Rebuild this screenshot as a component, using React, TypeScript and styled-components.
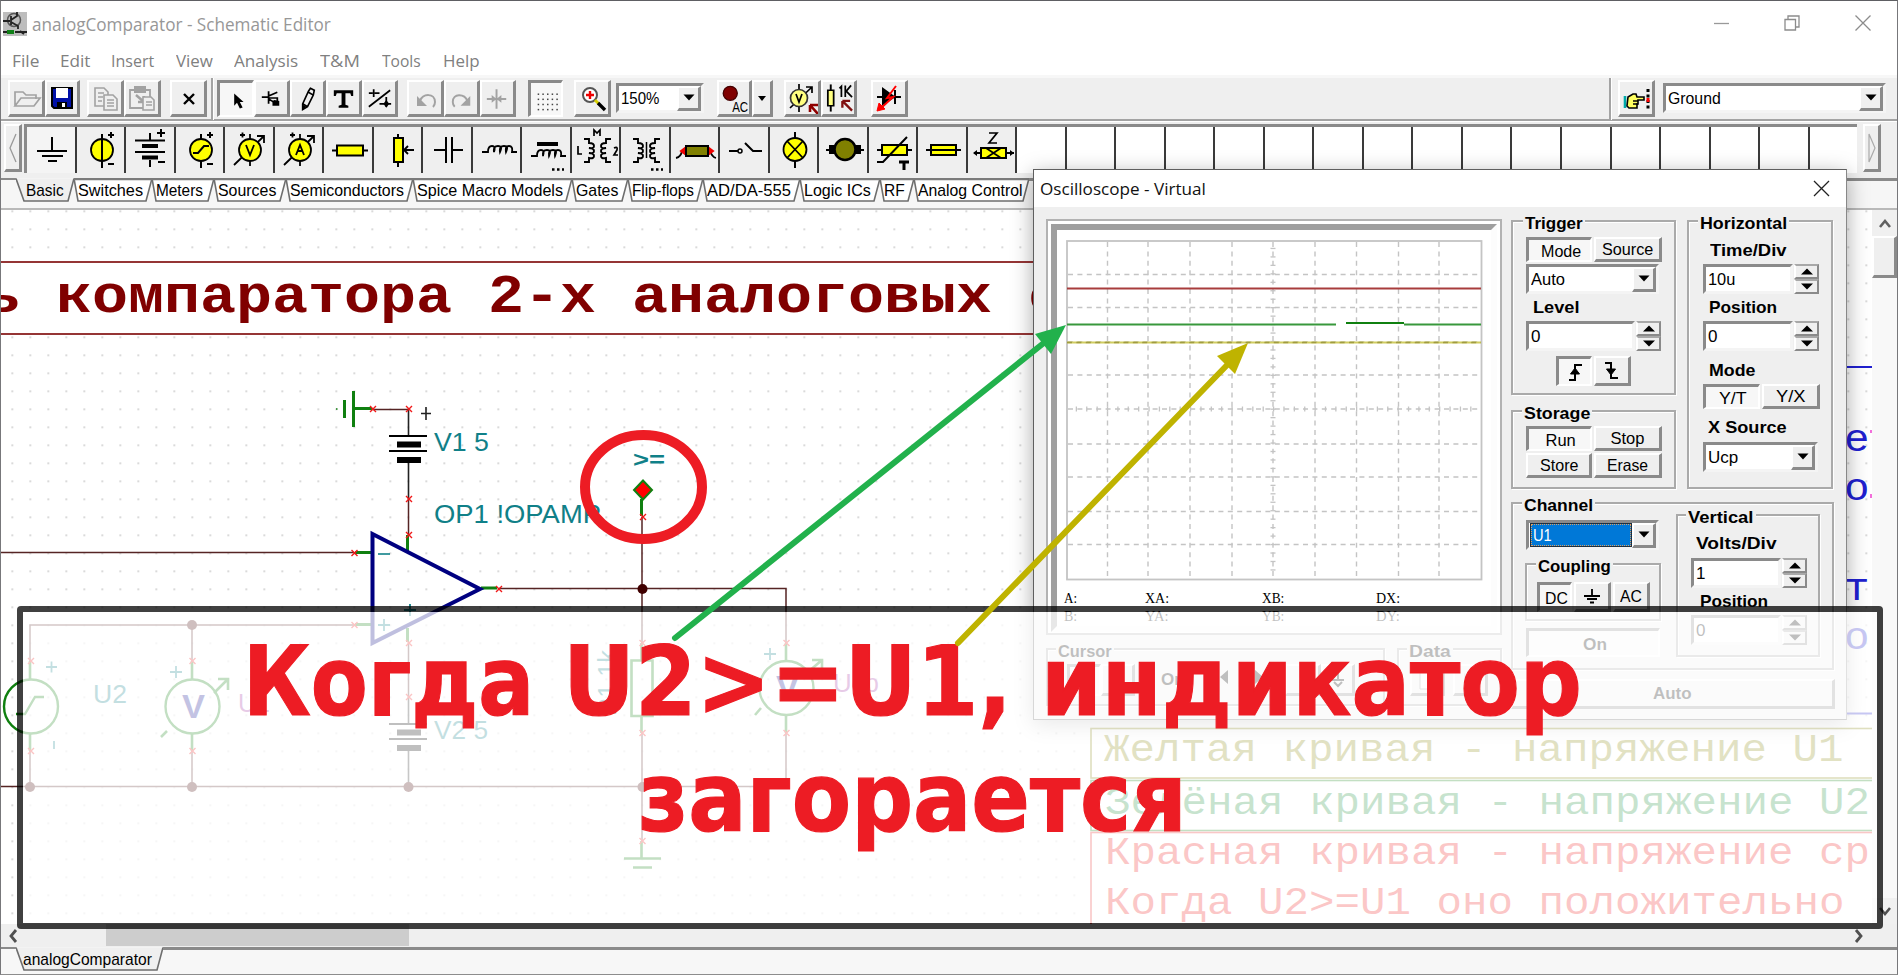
import React, { useLayoutEffect, useRef, useState } from "react";
import styled, { createGlobalStyle, css } from "styled-components";

const Global = createGlobalStyle`
  html, body { margin: 0; padding: 0; background: #fff; overflow: hidden; }
  *, *::before, *::after { box-sizing: border-box; }
  svg { display: block; }
`;

const SANS = `"Liberation Sans", Arial, sans-serif`;
const SEGOE = `"Open Sans", "Noto Sans", sans-serif`;
const MONO = `"Liberation Mono", "Courier New", monospace`;
const FACE = "#efefef";
const SHADE = "#8a8a8a";

/* Text squeezed or stretched horizontally to a fixed width */
const FitBox = styled.span`
  display: inline-block;
  flex: none;
  white-space: nowrap;
  text-align: left;
`;
const FitInner = styled.span`
  display: inline-block;
  transform-origin: 0 50%;
  white-space: pre;
`;
function Fit({ w, children }: { w: number; children: React.ReactNode }) {
  const ref = useRef<HTMLSpanElement>(null);
  const [k, setK] = useState(1);
  useLayoutEffect(() => {
    if (ref.current) setK(w / ref.current.offsetWidth);
  }, [w]);
  return (
    <FitBox style={{ width: w }}>
      <FitInner ref={ref} style={{ transform: `scaleX(${k})` }}>{children}</FitInner>
    </FitBox>
  );
}

/* ---------- shared bevel parts ---------- */
const raised = css`
  background: ${FACE};
  border-style: solid;
  border-width: 2px 3px 3px 2px;
  border-color: #fff ${SHADE} ${SHADE} #fff;
`;
const sunken = css`
  background: #f7f7f7;
  border-style: solid;
  border-width: 3px 2px 2px 3px;
  border-color: ${SHADE} #fff #fff ${SHADE};
`;
const Button = styled.div<{ $w: number; $h?: number; $down?: boolean; $bold?: boolean }>`
  ${(p) => (p.$down ? sunken : raised)}
  width: ${(p) => p.$w}px;
  height: ${(p) => p.$h ?? 25}px;
  flex: none;
  display: flex;
  align-items: center;
  justify-content: center;
  overflow: hidden;
  padding: ${(p) => (p.$down ? "2px 0 0 2px" : "0")};
  font: ${(p) => (p.$bold ? "bold " : "")}16.5px ${SANS};
  line-height: 1;
`;
const Field = styled.div<{ $w: number; $h?: number }>`
  width: ${(p) => p.$w}px;
  height: ${(p) => p.$h ?? 30}px;
  flex: none;
  display: flex;
  align-items: center;
  background: #fff;
  border: 3px solid;
  border-color: ${SHADE} #f4f4f4 #f4f4f4 ${SHADE};
  padding-left: 2px;
  font: 17px ${SANS};
  line-height: 1;
`;
const Grow = styled.div`
  flex: 1;
`;
const Space = styled.div<{ $w: number }>`
  width: ${(p) => p.$w}px;
  flex: none;
`;
const DropButton = styled.div`
  ${raised}
  width: 24px;
  height: 25px;
  display: flex;
  align-items: center;
  justify-content: center;
`;
const Down = () => (
  <svg width="12" height="7"><path d="M0.5 0.5H11.5L6 6.5Z" /></svg>
);
const Combo = ({ w, h, text, tw }: { w: number; h?: number; text: string; tw: number }) => (
  <Field $w={w} $h={h}>
    <Fit w={tw}>{text}</Fit>
    <Grow />
    <DropButton><Down /></DropButton>
  </Field>
);

/* ---------- main window ---------- */
const Win = styled.div`
  position: relative;
  width: 1898px;
  height: 975px;
  overflow: hidden;
  display: flex;
  flex-direction: column;
  background: #fff;
  border-top: 1px solid #5e5f63;
  border-left: 1px solid #77777a;
  border-right: 1px solid #77777a;
  border-bottom: 1px solid #8c8c8c;
`;
const TitleBar = styled.div`
  height: 46px;
  flex: none;
  display: flex;
  align-items: center;
  padding: 0 26px 0 2px;
  font: 18px ${SEGOE};
  color: #979797;
`;
const Controls = styled.div`
  display: flex;
  gap: 55px;
  padding-bottom: 2px;
`;
const MenuBar = styled.div`
  height: 28px;
  flex: none;
  display: flex;
  align-items: center;
  padding-left: 11px;
  font: 16px ${SEGOE};
  color: #808080;
`;
const MenuItem = styled.div<{ $w: number }>`
  width: ${(p) => p.$w}px;
`;
const Toolbar = styled.div`
  height: 46px;
  flex: none;
  display: flex;
  align-items: flex-start;
  padding: 2px 11px 0 7px;
  background: ${FACE};
  border-top: 3px solid #f7f7f7;
  border-bottom: 2px solid #a3a3a3;
`;
const Separator = styled.div`
  width: 3px;
  height: 42px;
  margin-top: -2px;
  flex: none;
  background: #a3a3a3;
  border-right: 1px solid #fff;
`;
const Lower = styled.div`
  padding-top: 3px;
`;

const Palette = styled.div`
  height: 57px;
  flex: none;
  display: flex;
  background: ${FACE};
  border-top: 1px solid #fff;
  padding: 2px 16px 0 3px;
`;
const Scroller = styled.div`
  ${raised}
  width: 18px;
  height: 48px;
  flex: none;
  display: flex;
  align-items: center;
  justify-content: center;
`;
const Cells = styled.div`
  width: 1833px;
  height: 49px;
  margin: 0 6px 0 2px;
  display: flex;
  border-top: 3px solid ${SHADE};
  border-left: 3px solid ${SHADE};
  background: #fff;
`;
const Cell = styled.div<{ $filled: boolean; $down?: boolean }>`
  flex: 1 1 0;
  height: 46px;
  border-right: 2px solid #3a3a3a;
  background: ${(p) => (p.$filled ? (p.$down ? "#f4f4f4" : FACE) : "#fff")};
  &:last-child { border-right: 0; }
`;

const TabStrip = styled.div`
  height: 32px;
  flex: none;
  display: flex;
  align-items: flex-start;
  background: #f6f6f6;
  border-bottom: 2px solid #b9b9b9;
`;
const TabLead = styled.div`
  width: 15px;
  height: 2px;
  background: ${SHADE};
`;
const TabBox = styled.div<{ $w: number }>`
  position: relative;
  width: ${(p) => p.$w}px;
  height: 25px;
  flex: none;
  font: 17px ${SANS};
  line-height: 26px;
`;
const TabBack = styled.svg`
  position: absolute;
  inset: 0;
`;
const TabText = styled.div<{ $x: number }>`
  position: relative;
  padding-left: ${(p) => p.$x}px;
`;
const TabRest = styled.div`
  flex: 1;
  height: 3px;
  background: ${SHADE};
`;
const Tab = ({ w, x, tw, text, active, h = 24 }: { w: number; x: number; tw: number; text: string; active?: boolean; h?: number }) => (
  <TabBox $w={w}>
    <TabBack width={w} height={h + 1}>
      <path d={`M0 0.5L${active ? 8 : 4} ${h - 1}H${w - 6}L${w} 0.5`} fill={active ? FACE : "#fff"} stroke="#6e6e6e" strokeWidth="1.6" />
      {!active && <path d={`M0 1H${w}`} stroke="#7b7b7b" strokeWidth="2.4" />}
    </TabBack>
    <TabText $x={x}><Fit w={tw}>{text}</Fit></TabText>
  </TabBox>
);

const Work = styled.div`
  height: 714px;
  flex: none;
  display: flex;
`;
const VScroll = styled.div`
  flex: 1;
  background: #f8f8f8;
  display: flex;
  flex-direction: column;
`;
const VArrow = styled.div`
  height: 26px;
  background: #f0f0f0;
  display: flex;
  align-items: center;
  justify-content: center;
`;
const VThumb = styled.div`
  ${raised}
  height: 42px;
`;
const HScroll = styled.div`
  height: 23px;
  flex: none;
  display: flex;
  align-items: center;
  background: ${FACE};
  padding: 0 32px 0 6px;
`;
const HThumb = styled.div`
  width: 303px;
  height: 22px;
  margin: 0 0 1px 88px;
  background: #cdcdcd;
`;
const Sheets = styled.div`
  flex: 1;
  display: flex;
  background: #f7f7f7;
`;

/* ---------- icons: toolbar ---------- */
const Ico = ({ children, w = 32, h = 32 }: { children: React.ReactNode; w?: number; h?: number }) => (
  <svg width={w} height={h} viewBox={`0 0 ${w} ${h}`} fill="none" stroke="#000" strokeWidth="2">{children}</svg>
);
const G = "#a2a2a2";
const OpenI = () => <Ico><path d="M5 24V10h8l3 3h10v4M5 24l6-8h19l-6 8z" stroke={G} strokeWidth="1.7" /></Ico>;
const SaveI = () => (
  <Ico w={30}><path d="M5 6h20v20H7l-2-2z" fill="#0010a8" stroke="#000" /><path d="M9 6h12v10H9z" fill="#fff" stroke="none" /><path d="M10 20h10v6H10z" fill="#000" stroke="none" /><path d="M15 21h3v4h-3z" fill="#fff" stroke="none" /></Ico>
);
const CopyI = () => <Ico><path d="M6 6h9l4 4v14H6zM9 11h6M9 15h5M9 19h4" stroke={G} strokeWidth="1.6" /><path d="M15 13h9l4 4v11H15z" fill={FACE} stroke={G} strokeWidth="1.6" /><path d="M18 18h7M18 21h7M18 24h7" stroke={G} strokeWidth="1.5" /></Ico>;
const PasteI = () => <Ico><path d="M4 8h20v18H4z" stroke={G} strokeWidth="1.8" /><path d="M9 5h10v5H9z" fill={G} stroke={G} /><path d="M10 13l8 7m0-6v6h-6" stroke={G} strokeWidth="2.4" /><path d="M17 15h8l3 3v10H17z" fill={FACE} stroke={G} strokeWidth="1.6" /><path d="M20 20h6M20 23h6" stroke={G} strokeWidth="1.4" /></Ico>;
const CloseI = () => <Ico><path d="M12 12l10 10M22 12L12 22" strokeWidth="2.4" /></Ico>;
const PointI = () => <Ico><path d="M13 9v13l3-3 3 6 3-1-3-6h4z" fill="#000" stroke="none" /></Ico>;
const WireI = () => <Ico><path d="M6 15h7M13 9v13M13 14l9-4M13 17l5 3M13 16h9v5" strokeWidth="1.8" /><path d="M17 24v-5l2-1 5 1v5z" fill="#000" stroke="none" /></Ico>;
const PenI = () => <Ico><path d="M19 6l4 2-1 5-6 12-5 3 0-6 6-13zM17 10l5 3M11 22l5 3" strokeWidth="1.7" /><path d="M11 23v5l4-3z" fill="#000" stroke="none" /></Ico>;
const TextI = () => <Ico><path d="M6 8h20v6h-2l-1-3h-5v12l3 1v2H11V24l3-1V11h-5l-1 3H6z" fill="#000" stroke="none" /></Ico>;
const OutI = () => <Ico><path d="M5 25L27 8M5 11h4M10 7v8M11 11h5M23 15v10M16 22h12" strokeWidth="1.8" /><path d="M20 22l3-4 3 4-3 4z" fill="#000" stroke="none" /></Ico>;
const UndoI = () => <Ico><path d="M11 19c3-8 15-8 15 1 0 2-1 4-2 5" stroke={G} /><path d="M8 14v10h10z" fill={G} stroke="none" /></Ico>;
const RedoI = () => <Ico><path d="M22 19c-3-8-15-8-15 1 0 2 1 4 2 5" stroke={G} /><path d="M25 14v10H15z" fill={G} stroke="none" /></Ico>;
const CrossI = () => <Ico><path d="M15 7v20M5 17h20" stroke={G} /><path d="M10 13l5 4-5 4zM20 13l-5 4 5 4z" fill={G} stroke="none" /></Ico>;
const GridI = () => (
  <Ico w={30}>{[10, 15.5, 21, 26.5].map((y) => [5, 10, 15, 20, 25].map((x) => <rect key={`${x}${y}`} x={x} y={y - 1} width="1.6" height="1.6" fill="#444" stroke="none" />))}</Ico>
);
const ZoomI = () => <Ico><circle cx="14" cy="13" r="7" fill="#fff" stroke="#555" /><path d="M14 9v8M10 13h8" stroke="#e00" strokeWidth="2.4" /><path d="M19 18l4 4" stroke="#d8d000" strokeWidth="3" /><path d="M22 21l7 7" strokeWidth="3.4" /></Ico>;
const AcI = () => <Ico><circle cx="12" cy="11" r="7.500" fill="#800000" stroke="#400" strokeWidth="1.4" /><text x="14" y="30.500" fontFamily="Liberation Sans" fontSize="15" fill="#000" stroke="none" textLength="17" lengthAdjust="spacingAndGlyphs">AC</text></Ico>;
const MeterI = () => <Ico><path d="M13 2v28M4 26L26 5M20 5h6v6" strokeWidth="1.7" /><circle cx="13" cy="16" r="8.500" fill="#ffff80" stroke="#333" strokeWidth="1.7" /><path d="M10 12l3 8 3-8" strokeWidth="1.700" /><path d="M24 23h8M24 23v7M24 23l8 9" stroke="#900000" strokeWidth="2.6" /></Ico>;
const OhmI = () => <Ico><path d="M8 2v28" /><path d="M5 8h6v16H5z" fill="#ffff80" strokeWidth="1.8" /><path d="M17 6l2-2v11M23 3v12M29 3l-5 6 6 6" strokeWidth="1.8" /><path d="M20 19h8M20 19v7M20 19l10 10" stroke="#801010" strokeWidth="2.4" /></Ico>;
const FaultI = () => <Ico><path d="M4 15h24M22 8v14" /><path d="M10 7v15l11-7z" fill="#000" /><path d="M23 4L14 16l6-1L7 27" stroke="#f00" strokeWidth="2" /><path d="M4 29l2-8 6 6z" fill="#f00" stroke="#f00" strokeWidth="1" /></Ico>;
const HandI = () => (
  <Ico><path d="M5 14v12" stroke="#00a8a8" strokeWidth="2.600" /><path d="M8 15l5-3h3l1 3h7v3h-6v4h-1v4h-8l-2-2z" fill="#ffff60" strokeWidth="1.6" /><path d="M13 19h5M13 22h5" strokeWidth="1.300" /><path d="M28 7v21" strokeWidth="3" strokeDasharray="3 2.500" /><path d="M28 16v4" stroke="#f00" strokeWidth="3" /></Ico>
);

/* ---------- icons: component palette ---------- */
const Y = "#ffff00";
const coil = (x: number, y: number) => `M${x} ${y}h6q0-6 4-6t2 6q-1-6 4-6t2 6q-1-6 4-6t2 6q-1-6 3-6t3 6h5`;
const vcoil = (x: number, y: number, s: number) => `M${x} ${y}h${5 * s}v4q${5 * s} 0 ${5 * s} 3t${-5 * s} 2q${5 * s} 0 ${5 * s} 3t${-5 * s} 2q${5 * s} 0 ${5 * s} 3t${-5 * s} 2v4h${-5 * s}`;
const circleC = <><path d="M24 8v34M30 9h6M33 6v6M30 38h6" /><circle cx="24" cy="24" r="11" fill={Y} strokeWidth="1.800" /></>;
const meterC = <><path d="M24 8v32M8 39L38 10M31 10h7v7M14 9h5M16.500 6.500v5" strokeWidth="1.800" /><circle cx="24" cy="24" r="11" fill={Y} strokeWidth="1.800" /></>;
const paletteIcons: React.ReactNode[] = [
  <path d="M24 11v14M9 25h30M14 30h21M20 35h9" />,
  <>{circleC}<path d="M24 10v28" /></>,
  <><path d="M23 7v7M8 14.500h30M8 26h30M23 34v7M30 7h8M34 3v8M31 36h7" /><path d="M15 20h16M15 31.500h16" strokeWidth="4" /></>,
  <>{circleC}<path d="M16 27h5l6-7h5" /></>,
  <>{meterC}<path d="M20 19l4 10 4-10" strokeWidth="1.800" /></>,
  <>{meterC}<path d="M20 29l4-10 4 10M21 25h6" strokeWidth="1.800" /></>,
  <><path d="M7 24.500h36" /><path d="M12 19.500h26v10H12z" fill={Y} /></>,
  <><path d="M23 8v33" /><path d="M19 12h9v24h-9z" fill={Y} /><path d="M39 24H29M33 20l-4 4 4 4" strokeWidth="1.800" /></>,
  <path d="M10 24h11M22 11v26M28 11v26M28 24h11" />,
  <path d={coil(8, 26)} strokeWidth="1.800" />,
  <><path d="M14 18h21" strokeWidth="4" /><path d={coil(8, 30)} strokeWidth="1.800" /><path d="M29 43.500h12" strokeWidth="2.500" strokeDasharray="2.500 2.500" /></>,
  <><path d={vcoil(11, 13, 1) + vcoil(38, 13, -1)} strokeWidth="1.900" /><path d="M21 10V4l3 3 3-3v6M5 20v8h4M41 22q4-2 3 2l-3 5h4" strokeWidth="1.700" /></>,
  <><path d={vcoil(11, 13, 1) + vcoil(38, 13, -1)} strokeWidth="1.900" /><path d="M24.500 16v16" strokeWidth="1.500" /><path d="M29 43.500h12" strokeWidth="2.500" strokeDasharray="2.500 2.500" /></>,
  <><path d="M4 32q5-1 6-7h28q2 6 6 7" strokeWidth="1.800" /><path d="M9 25l4-3v6zM41 25l-4-3v6z" fill="#e00" stroke="#e00" /><path d="M14 20h22v10H14z" fill="#808000" /></>,
  <><path d="M8 25h9M24 17l8 8h9" /><circle cx="19" cy="25" r="2" strokeWidth="1.500" /></>,
  <><path d="M24 6v36" /><circle cx="24" cy="23.500" r="11.500" fill={Y} strokeWidth="1.800" /><path d="M16 15l16 17M32 15L16 32" strokeWidth="1.800" /></>,
  <><path d="M6 24h38" /><path d="M9 19h6v9H9zM35 19h6v9h-6z" fill="#000" stroke="none" /><circle cx="25" cy="23.500" r="10.500" fill="#808000" strokeWidth="2.500" /></>,
  <><path d="M7 24h35" /><path d="M12 19h25v10H12z" fill={Y} /><path d="M7 36h6l24-25" /><path d="M29 36h10M34 36v8" strokeWidth="3" /></>,
  <><path d="M7 24h35" /><path d="M12 19h25v10H12z" fill={Y} /><path d="M12 24h25" /></>,
  <><path d="M5 27h40" /><path d="M4 27l4-3v6zM45 27l-4-3v6z" fill="#000" stroke="none" /><path d="M12 22h25v10H12z" fill={Y} /><path d="M17 22l15 10M17 32l15-10M20 7h8l-8 10h8" strokeWidth="1.700" /></>,
];

/* ---------- schematic ---------- */
const Mark = ({ x, y }: { x: number; y: number }) => <path d={`M${x - 3} ${y - 3}l6 6M${x + 3} ${y - 3}l-6 6`} stroke="#f01818" strokeWidth="1.4" />;
const Node = ({ x, y }: { x: number; y: number }) => <circle cx={x} cy={y} r="5" fill="#400000" />;
const Battery = ({ y }: { y: number }) => (
  <g stroke="#000">
    <path d={`M389 ${y}h38M389 ${y + 15}h38`} strokeWidth="2" />
    <path d={`M397 ${y + 8.5}h24M397 ${y + 24}h24`} strokeWidth="6" />
  </g>
);
const T = "#108088";
const Label = ({ x, y, w, s = 25.5, c = T, b, children }: { x: number; y: number; w: number; s?: number; c?: string; b?: boolean; children: string }) => (
  <text x={x} y={y} fontFamily="Liberation Sans" fontSize={s} fill={c} fontWeight={b ? "bold" : "normal"} textLength={w} lengthAdjust="spacingAndGlyphs">{children}</text>
);
const Mono = ({ x, y, s, pitch, c, b, children }: { x: number; y: number; s: number; pitch: number; c: string; b?: boolean; children: string }) => (
  <text x={x} y={y} fontFamily={MONO} fontSize={s} fill={c} fontWeight={b ? "bold" : "normal"} textLength={pitch * children.length} lengthAdjust="spacingAndGlyphs" style={{ whiteSpace: "pre" }}>{children}</text>
);
const Schematic = () => (
  <svg width="1871" height="714" viewBox="1 210 1871 714" fill="none">
    <defs>
      <pattern id="dots" x="11.500" y="210.500" width="18" height="18" patternUnits="userSpaceOnUse">
        <rect width="1.500" height="1.500" fill="#bdbdbd" />
      </pattern>
    </defs>
    <rect x="1" y="210" width="1871" height="714" fill="#fff" />
    <rect x="1" y="210" width="1871" height="714" fill="url(#dots)" />
    <rect x="-5" y="262" width="1200" height="72" fill="#fff" stroke="#8a2020" strokeWidth="1.800" />
    <Mono x={-16} y={312} s={53} pitch={36} c="#800000" b>ь компаратора 2-х аналоговых с</Mono>

    <g stroke="#562424" strokeWidth="1.500">
      <path d="M1 552.500H354M373 409.500H409M408.500 499V535M30 661V625H354M192 625V661M499 588.500H786V643M642 517V643M1 786.500H786V733M642 733V841M30 751V787M192 751V787M408.500 643V697" />
    </g>
    <path d="M408.500 409V436M408.500 462V499M408.500 697V724M408.500 750V787M426 407V420M421 413.500H431" stroke="#222" strokeWidth="1.600" />
    <Battery y={436} />
    <Battery y={724} />
    <g stroke="#108010" strokeWidth="3">
      <path d="M353.500 391V427M344.500 400V418M353 408.500H372M407.500 535V551M355 552.500H371M355 624.500H372M407.500 628V642M481 588H497M641.500 499V516" />
      <path d="M641.500 643V660M631.500 660.500H652.500V716H631.500ZM641.500 716V733M641.500 841V858M624 858.500H661M633 867.500H652" strokeWidth="2.600" />
      <path d="M30 661V679M30 734V751M192 661V679M192 734V751M786 643V660M786 716V733" strokeWidth="2.600" />
      <path d="M161 737L167 731M214 693L227 680M218 679H228V690M755 715L761 708M808 672L822 660M812 660H822V671" strokeWidth="2.600" />
      <circle cx="31" cy="706.500" r="27" strokeWidth="2.400" />
      <circle cx="192.500" cy="706.500" r="27" strokeWidth="2.400" />
      <circle cx="786.500" cy="688" r="27" strokeWidth="2.400" />
      <path d="M16 714H25L35 697H44" strokeWidth="2.400" />
      <path d="M336 409h1.500" strokeWidth="1.500" />
    </g>
    <path d="M372.500 534V643L480 589Z" stroke="#000080" strokeWidth="4" />
    <path d="M378 554h12" stroke={T} strokeWidth="1.600" />
    <path d="M378 625h12M384 619v12M404 610h12M410 604v12M46 667h11M51.500 661.500v11M54 741v8M170 672h12M176 666v12M764 654h12M770 648v12" stroke={T} strokeWidth="1.800" />
    {[[373, 409], [409, 409], [409, 499], [409, 535], [354.500, 553], [354.500, 625], [409, 643], [409, 697], [499, 589], [642.500, 643], [786.500, 643], [642.500, 733], [786.500, 733], [642.500, 841], [643, 517], [31, 661], [31, 751], [192.500, 661], [192.500, 751], [408.500, 787]].map(([x, y]) => <Mark key={`${x}-${y}`} x={x} y={y} />)}
    {[[30, 787], [192, 787], [408.500, 787], [642.500, 787], [192, 625], [642.500, 589]].map(([x, y]) => <Node key={`${x}-${y}`} x={x} y={y} />)}
    <path d="M643 480.500l9 9.500-9 9.500-9-9.500z" fill="#f00" stroke="#108010" strokeWidth="2" />
    <Label x={434} y={451} w={55}>V1 5</Label>
    <Label x={434} y={523} w={167}>OP1 !OPAMP</Label>
    <Label x={633} y={467} w={32} s={22} b>{">="}</Label>
    <Label x={93} y={703} w={34}>U2</Label>
    <Label x={238} y={712} w={32} c="#a030a0">U1</Label>
    <Label x={434} y={739} w={54}>V2 5</Label>
    <Label x={833} y={692} w={46} c="#a030a0">Ucp</Label>
    <Label x={182} y={718} w={23} s={33} c="#101090" b>V</Label>
    <Label x={776} y={699} w={23} s={33} c="#101090" b>V</Label>
    <g transform="translate(616 716) rotate(-90)"><Label x={0} y={0} w={66}>R1 1k</Label></g>

    <g stroke="#2020d0" strokeWidth="1.800"><path d="M1200 367H1872M1200 713.500H1872" /></g>
    <Mono x={1844} y={451} s={38} pitch={25.5} c="#2020d0">е</Mono>
    <Mono x={1844} y={500} s={38} pitch={25.5} c="#2020d0">о</Mono>
    <Mono x={1844} y={600} s={38} pitch={25.5} c="#2020d0">т</Mono>
    <Mono x={1844} y={649} s={38} pitch={25.5} c="#2020d0">о</Mono>
    <path d="M1871 430v3M1871 494v4" stroke="#f040d0" strokeWidth="1.500" />
    <rect x="1091" y="728.500" width="900" height="49.500" fill="#fff" stroke="#808000" strokeWidth="1.600" />
    <rect x="1091" y="780.500" width="900" height="50" fill="#fff" stroke="#108010" strokeWidth="1.600" />
    <rect x="1091" y="832.500" width="900" height="200" fill="#fff" stroke="#e82020" strokeWidth="1.600" />
    <Mono x={1104} y={761} s={38} pitch={25.5} c="#8a8a10">Желтая кривая - напряжение U1</Mono>
    <Mono x={1105} y={814} s={38} pitch={25.5} c="#20903c">Зелёная кривая - напряжение U2</Mono>
    <Mono x={1105} y={864} s={38} pitch={25.5} c="#f02020">Красная кривая - напряжение ср</Mono>
    <Mono x={1105} y={914} s={38} pitch={25.5} c="#f02020">{"Когда U2>=U1 оно положительно"}</Mono>
  </svg>
);

/* ---------- oscilloscope ---------- */
const Scope = styled.div`
  position: absolute;
  left: 1032px;
  top: 168px;
  width: 814px;
  height: 551px;
  display: flex;
  flex-direction: column;
  background: ${FACE};
  border: 1px solid #5f5f5f;
  border-right-color: #888;
  box-shadow: 0 5px 20px rgba(0, 0, 0, 0.34);
`;
const ScopeTitle = styled.div`
  height: 37px;
  flex: none;
  display: flex;
  align-items: center;
  padding: 0 16px 1px 6px;
  background: #fff;
  font: 17px ${SEGOE};
  color: #111;
`;
const ScopeBody = styled.div`
  flex: 1;
  display: flex;
  gap: 9px;
  padding: 12px 0 0 12px;
`;
const Col = styled.div<{ $w?: number }>`
  width: ${(p) => (p.$w ? p.$w + "px" : "auto")};
  flex: none;
  display: flex;
  flex-direction: column;
  align-items: flex-start;
`;
const Row = styled.div<{ $mt?: number; $ml?: number; $gap?: number }>`
  display: flex;
  align-items: flex-start;
  gap: ${(p) => p.$gap ?? 0}px;
  margin-top: ${(p) => p.$mt ?? 0}px;
  margin-left: ${(p) => p.$ml ?? 0}px;
`;
const Screen = styled.div`
  width: 456px;
  height: 416px;
  padding: 3px;
  border: 2px solid #b2b2b2;
  background: #fff;
`;
const Bevel = styled.div`
  width: 446px;
  height: 408px;
  padding: 10px 0 0 9px;
  border: 6px solid;
  border-color: #9f9f9f #fcfcfc #fcfcfc #9f9f9f;
`;
const Readout = styled.div`
  display: grid;
  grid-template-columns: 81px 117px 114px 60px;
  margin: 9px 0 0 -2px;
  font: 14px/18px "Liberation Serif", "Times New Roman", serif;
`;
const Group = styled.div<{ $w: number; $h: number; $pl: number }>`
  width: ${(p) => p.$w}px;
  height: ${(p) => p.$h}px;
  flex: none;
  display: flex;
  flex-direction: column;
  align-items: flex-start;
  padding-left: ${(p) => p.$pl - 2}px;
  border: 2px solid #aaa;
  box-shadow: 1px 1px 0 #fff, inset 1px 1px 0 #fff;
`;
const Legend = styled.div`
  height: 16px;
  margin: -6px 0 -4px;
  padding: 0 2px;
  flex: none;
  background: ${FACE};
  font: bold 17px/16px ${SANS};
`;
const Caption = styled.div<{ $h: number; $pt?: number; $ml: number }>`
  height: ${(p) => p.$h}px;
  flex: none;
  padding-top: ${(p) => p.$pt ?? 0}px;
  margin-left: ${(p) => p.$ml}px;
  font: bold 17px ${SANS};
  line-height: ${(p) => p.$h - (p.$pt ?? 0)}px;
`;
const SpinBox = styled.div`
  width: 25px;
  height: 30px;
  display: flex;
  flex-direction: column;
`;
const SpinBtn = styled.div`
  flex: 1;
  background: ${FACE};
  border: 2px solid;
  border-color: #a8a8a8 ${SHADE} ${SHADE} #fff;
  display: flex;
  align-items: center;
  justify-content: center;
`;
const Spin = ({ w, text, tw }: { w: number; text: string; tw: number }) => (
  <Row $gap={1}>
    <Field $w={w}><Fit w={tw}>{text}</Fit></Field>
    <SpinBox>
      <SpinBtn><svg width="12" height="7"><path d="M0 6.500H12L6 0.500Z" /></svg></SpinBtn>
      <SpinBtn><svg width="12" height="7"><path d="M0 0.500H12L6 6.500Z" /></svg></SpinBtn>
    </SpinBox>
  </Row>
);
const Selected = styled.div`
  width: 100px;
  height: 22px;
  display: flex;
  align-items: center;
  background: #0078d7;
  border: 1px dotted #e0a060;
  outline: 1px solid #203040;
  color: #fff;
  padding-left: 1px;
`;
const ScopeGrid = () => {
  const xs = [41.5, 82, 124, 166, 207, 249, 290.500, 332.500, 373];
  const ys = [34.500, 67.500, 102, 135, 169, 204, 237, 271.500, 304.500];
  const hx = Array.from({ length: 39 }, (_, i) => (i + 1) * 10.38);
  const vy = Array.from({ length: 39 }, (_, i) => (i + 1) * 8.46);
  return (
    <svg width="417" height="341" fill="none">
      <rect x="1" y="1" width="414.500" height="338.500" stroke="#c4c4c4" strokeWidth="1.800" />
      <g stroke="#c4c4c4" strokeWidth="1.400" strokeDasharray="5 4.400">
        {xs.map((x) => <path key={x} d={`M${x} 2V339`} />)}
        {ys.map((y) => <path key={y} d={`M2 ${y}H415`} />)}
      </g>
      <g stroke="#c4c4c4" strokeWidth="1.300">
        {hx.map((x) => <path key={x} d={`M${x} 166.500v5`} />)}
        {vy.map((y) => <path key={y} d={`M204.500 ${y}h5`} />)}
      </g>
      <path d="M1 48.500H415" stroke="#a83c3c" strokeWidth="1.800" />
      <path d="M1 84.500H270" stroke="#38983c" strokeWidth="1.800" />
      <path d="M280 83H338" stroke="#108010" strokeWidth="1.800" />
      <path d="M338 84.500H415" stroke="#38983c" strokeWidth="1.800" />
      <path d="M1 102.500H415" stroke="#d0cc60" strokeWidth="2" />
      <path d="M1 102.500H415" stroke="#a09c40" strokeWidth="1.600" strokeDasharray="5 4.400" />
    </svg>
  );
};
const PlainBold = styled.div`
  width: 22px;
  font: bold 17px/32px ${SANS};
`;
const Oscilloscope = () => (
  <Scope>
    <ScopeTitle>
      <Fit w={166}>Oscilloscope - Virtual</Fit>
      <Grow />
      <svg width="17" height="17" stroke="#222" strokeWidth="1.300"><path d="M1 1L16 16M16 1L1 16" /></svg>
    </ScopeTitle>
    <ScopeBody>
      <Col $w={456}>
        <Screen>
          <Bevel>
            <ScopeGrid />
            <Readout>
              <Fit w={13}>A:</Fit><Fit w={24}>XA:</Fit><Fit w={22}>XB:</Fit><Fit w={24}>DX:</Fit>
              <Fit w={13}>B:</Fit><Fit w={24}>YA:</Fit><Fit w={22}>YB:</Fit><Fit w={24}>DY:</Fit>
            </Readout>
          </Bevel>
        </Screen>
        <Row $mt={13} $gap={12}>
          <Group $w={339} $h={58} $pl={10}>
            <Legend><Fit w={54}>Cursor</Fit></Legend>
            <Row $mt={8} $ml={11}>
              <Button $w={34} $h={32} $down />
              <Button $w={34} $h={32} />
              <Space $w={26} />
              <PlainBold>On</PlainBold>
              <Space $w={36} />
              <Lower><svg width="50" height="22"><path d="M9 3v14L1 10zM36 3v14l8-7z" /></svg></Lower>
              <Space $w={16} />
              <Button $w={36} $h={32} />
              <Button $w={34} $h={32}><svg width="16" height="16" stroke="#000" strokeWidth="2" fill="none"><path d="M8 0v8M2 8h12M4 10l4 4 4-4" /></svg></Button>
            </Row>
          </Group>
          <Group $w={105} $h={58} $pl={10}>
            <Legend><Fit w={42}>Data</Fit></Legend>
            <Row $mt={8} $gap={8} $ml={3}>
              <Button $w={35} $h={32}><svg width="18" height="20" fill="#fff" stroke="#999"><path d="M2 1h10v4h4v14H2z" /></svg></Button>
              <Button $w={35} $h={32}><svg width="18" height="20" fill="#ccc"><path d="M3 3l12 7-12 7z" /></svg></Button>
            </Row>
          </Group>
        </Row>
      </Col>
      <Col $w={324}>
        <Row $mt={1} $gap={11}>
          <Col $w={165}>
            <Group $w={165} $h={175} $pl={12}>
              <Legend><Fit w={58}>Trigger</Fit></Legend>
              <Row $mt={9} $ml={3} $gap={2}>
                <Button $w={66} $down><Fit w={40}>Mode</Fit></Button>
                <Button $w={68}><Fit w={51}>Source</Fit></Button>
              </Row>
              <Row $mt={2} $ml={3}><Combo w={133} text="Auto" tw={34} /></Row>
              <Caption $h={27} $ml={10}><Fit w={46}>Level</Fit></Caption>
              <Row $ml={3}><Spin w={109} text="0" tw={9} /></Row>
              <Row $mt={5} $ml={33} $gap={2}>
                <Button $w={36} $h={30} $down><svg width="16" height="20" fill="none" stroke="#000" strokeWidth="2"><path d="M1 17h6V2h7" /><path d="M2.500 11L7 5l4.500 6z" fill="#000" strokeWidth="1" /></svg></Button>
                <Button $w={37} $h={30}><svg width="16" height="20" fill="none" stroke="#000" strokeWidth="2"><path d="M1 2h6v15h7" /><path d="M2.500 8L7 14l4.500-6z" fill="#000" strokeWidth="1" /></svg></Button>
              </Row>
            </Group>
            <Row $mt={15}>
              <Group $w={165} $h={79} $pl={11}>
                <Legend><Fit w={66}>Storage</Fit></Legend>
                <Row $mt={8} $ml={4} $gap={2}>
                  <Button $w={66} $down><Fit w={30}>Run</Fit></Button>
                  <Button $w={68}><Fit w={34}>Stop</Fit></Button>
                </Row>
                <Row $mt={2} $ml={4} $gap={2}>
                  <Button $w={66}><Fit w={38}>Store</Fit></Button>
                  <Button $w={68}><Fit w={41}>Erase</Fit></Button>
                </Row>
              </Group>
            </Row>
          </Col>
          <Group $w={146} $h={269} $pl={11}>
            <Legend><Fit w={87}>Horizontal</Fit></Legend>
            <Caption $h={36} $pt={9} $ml={12}><Fit w={77}>Time/Div</Fit></Caption>
            <Row $ml={5}><Spin w={90} text="10u" tw={27} /></Row>
            <Caption $h={27} $ml={11}><Fit w={68}>Position</Fit></Caption>
            <Row $ml={5}><Spin w={90} text="0" tw={9} /></Row>
            <Caption $h={33} $pt={7} $ml={11}><Fit w={46}>Mode</Fit></Caption>
            <Row $ml={5} $gap={2}>
              <Button $w={57} $down><Fit w={28}>Y/T</Fit></Button>
              <Button $w={58}><Fit w={30}>Y/X</Fit></Button>
            </Row>
            <Caption $h={33} $pt={4} $ml={10}><Fit w={79}>X Source</Fit></Caption>
            <Row $ml={5}><Combo w={115} text="Ucp" tw={30} /></Row>
          </Group>
        </Row>
        <Row $mt={13}>
          <Group $w={323} $h={168} $pl={11}>
            <Row $gap={17}>
              <Col $w={137}>
                <Legend><Fit w={69}>Channel</Fit></Legend>
                <Row $mt={10} $ml={4}>
                  <Field $w={133}>
                    <Selected><Fit w={19}>U1</Fit></Selected>
                    <Grow />
                    <DropButton><Down /></DropButton>
                  </Field>
                </Row>
                <Row $mt={13} $ml={3}>
                  <Group $w={136} $h={58} $pl={11}>
                    <Legend><Fit w={73}>Coupling</Fit></Legend>
                    <Row $mt={11} $ml={1} $gap={2}>
                      <Button $w={35} $h={30} $down><Fit w={23}>DC</Fit></Button>
                      <Button $w={37} $h={30}><svg width="18" height="16" fill="none" stroke="#000" strokeWidth="1.800"><path d="M9 0v7M1 7h16M4 10h10M7 13.500h4" /></svg></Button>
                      <Button $w={37} $h={30}><Fit w={22}>AC</Fit></Button>
                    </Row>
                  </Group>
                </Row>
                <Row $mt={7} $ml={4}><Button $w={134} $h={29} $down $bold><Fit w={24}>On</Fit></Button></Row>
              </Col>
              <Row $mt={10}>
                <Group $w={144} $h={143} $pl={10}>
                  <Legend><Fit w={66}>Vertical</Fit></Legend>
                  <Caption $h={36} $pt={8} $ml={10}><Fit w={80}>Volts/Div</Fit></Caption>
                  <Row $ml={5}><Spin w={90} text="1" tw={9} /></Row>
                  <Caption $h={27} $ml={14}><Fit w={68}>Position</Fit></Caption>
                  <Row $ml={5}><Spin w={90} text="0" tw={9} /></Row>
                </Group>
              </Row>
            </Row>
          </Group>
        </Row>
        <Row $mt={9}><Button $w={324} $h={30} $bold><Fit w={39}>Auto</Fit></Button></Row>
      </Col>
    </ScopeBody>
  </Scope>
);

/* ---------- annotations ---------- */
const Callout = styled.div`
  position: absolute;
  left: 16px;
  top: 605px;
  width: 1866px;
  height: 323px;
  border: 6px solid rgba(0, 0, 0, 0.75);
  border-radius: 4px;
  background: rgba(255, 255, 255, 0.75);
  background-clip: padding-box;
  padding: 12px 76px 0 0;
  display: flex;
  flex-direction: column;
  align-items: center;
  font: bold 97px/116px "DejaVu Sans", Verdana, sans-serif;
  color: #ed1c24;
  -webkit-text-stroke: 1.2px #ed1c24;
`;
const Words = styled.div`
  display: flex;
  gap: 29px;
`;
const Pointers = styled.svg`
  position: absolute;
  left: -1px;
  top: -1px;
`;

const menu: [string, number, number][] = [["File", 48, 27], ["Edit", 51, 30], ["Insert", 65, 43], ["View", 58, 37], ["Analysis", 86, 64], ["T&M", 62, 40], ["Tools", 61, 39], ["Help", 60, 37]];
const tabs: [string, number, number, number][] = [
  ["Basic", 58, 10, 38], ["Switches", 78, 4, 65], ["Meters", 62, 4, 47], ["Sources", 72, 4, 58], ["Semiconductors", 127, 4, 114],
  ["Spice Macro Models", 159, 4, 146], ["Gates", 56, 4, 42], ["Flip-flops", 75, 4, 62], ["AD/DA-555", 97, 4, 84],
  ["Logic ICs", 80, 4, 67], ["RF", 34, 4, 21], ["Analog Control", 115, 4, 104],
];

export default function App() {
  return (
    <>
      <Global />
      <Win>
        <TitleBar>
          <svg width="24" height="24" fill="none"><rect width="24" height="24" fill="#bdbdbd" /><circle cx="11" cy="8" r="6.500" stroke="#555" strokeWidth="1.500" /><path d="M0 9h7M8 4v9M8 8l6-4V0M8 10l7 4v3" stroke="#222" strokeWidth="1.800" /><path d="M4 20h7" stroke="#108018" strokeWidth="4" /><path d="M0 20h4M12 20h12M17 19l4 3" stroke="#222" strokeWidth="2" /></svg>
          <Space $w={5} />
          <Fit w={299}>analogComparator - Schematic Editor</Fit>
          <Grow />
          <Controls>
            <svg width="15" height="16"><path d="M0 8.500H15" stroke="#999" strokeWidth="1.300" /></svg>
            <svg width="16" height="16" fill="none" stroke="#8c8c8c" strokeWidth="1.300"><path d="M1 4.500h10.500v10.500H1zM4 4V1h11v11h-3" /></svg>
            <svg width="16" height="16"><path d="M0.500 0.500l15 15M15.500 0.500l-15 15" stroke="#8c8c8c" strokeWidth="1.300" /></svg>
          </Controls>
        </TitleBar>
        <MenuBar>{menu.map(([t, w, tw]) => <MenuItem key={t} $w={w}><Fit w={tw}>{t}</Fit></MenuItem>)}</MenuBar>
        <Toolbar>
          <Button $w={37} $h={37}><OpenI /></Button>
          <Button $w={35} $h={37}><SaveI /></Button>
          <Space $w={7} />
          <Button $w={37} $h={37}><CopyI /></Button>
          <Button $w={37} $h={37}><PasteI /></Button>
          <Space $w={9} />
          <Button $w={37} $h={37}><CloseI /></Button>
          <Space $w={4} /><Separator /><Space $w={3} />
          <Button $w={37} $h={37} $down><PointI /></Button>
          <Button $w={36} $h={37}><WireI /></Button>
          <Button $w={36} $h={37}><PenI /></Button>
          <Button $w={36} $h={37}><TextI /></Button>
          <Button $w={36} $h={37}><OutI /></Button>
          <Space $w={9} />
          <Button $w={37} $h={37}><UndoI /></Button>
          <Button $w={36} $h={37}><RedoI /></Button>
          <Button $w={36} $h={37}><CrossI /></Button>
          <Space $w={12} />
          <Button $w={35} $h={37} $down><GridI /></Button>
          <Space $w={11} />
          <Button $w={37} $h={37}><ZoomI /></Button>
          <Space $w={5} />
          <Lower><Combo w={88} text="150%" tw={38} /></Lower>
          <Space $w={13} />
          <Button $w={35} $h={37}><AcI /></Button>
          <Button $w={21} $h={37}><svg width="8" height="5"><path d="M0 0H8L4 5Z" /></svg></Button>
          <Space $w={11} />
          <Button $w={37} $h={37}><MeterI /></Button>
          <Button $w={36} $h={37}><OhmI /></Button>
          <Space $w={14} />
          <Button $w={37} $h={37}><FaultI /></Button>
          <Grow />
          <Separator /><Space $w={6} />
          <Button $w={37} $h={37}><HandI /></Button>
          <Space $w={8} />
          <Lower><Combo w={223} text="Ground" tw={53} /></Lower>
        </Toolbar>
        <Palette>
          <Scroller><svg width="8" height="30" fill="none" stroke="#999"><path d="M7 1L1 15l6 14" strokeWidth="1.300" /></svg></Scroller>
          <Cells>
            {Array.from({ length: 37 }, (_, i) => (
              <Cell key={i} $filled={i < 20} $down={i === 0}>
                {i < 20 && <svg width="47" height="46" viewBox="-1 1 47 46" fill="none" stroke="#000" strokeWidth="2">{paletteIcons[i]}</svg>}
              </Cell>
            ))}
          </Cells>
          <Scroller><svg width="8" height="30" fill="none" stroke="#aaa"><path d="M1 1l6 14-6 14z" strokeWidth="1.200" /></svg></Scroller>
        </Palette>
        <TabStrip>
          <TabLead />
          {tabs.map(([t, w, x, tw], i) => <Tab key={t} text={t} w={w} x={x} tw={tw} active={i === 0} />)}
          <TabRest />
        </TabStrip>
        <Work>
          <Schematic />
          <VScroll>
            <VArrow><svg width="12" height="9"><path d="M1 8l5-6 5 6" fill="none" stroke="#606060" strokeWidth="2.600" /></svg></VArrow>
            <VThumb />
            <Grow />
            <VArrow><svg width="12" height="9"><path d="M1 1l5 6 5-6" fill="none" stroke="#505050" strokeWidth="2.600" /></svg></VArrow>
          </VScroll>
        </Work>
        <HScroll>
          <svg width="11" height="14"><path d="M9 1L4 7l5 6" fill="none" stroke="#505050" strokeWidth="2.800" /></svg>
          <HThumb />
          <Grow />
          <svg width="11" height="14"><path d="M2 1l5 6-5 6" fill="none" stroke="#505050" strokeWidth="2.800" /></svg>
        </HScroll>
        <Sheets>
          <TabLead />
          <Tab w={147} x={7} tw={129} text="analogComparator" active />
          <TabRest />
        </Sheets>
        <Oscilloscope />
        <Callout>
          <Words>
            <Fit w={291}>Когда</Fit>
            <Fit w={449}>{"U2>=U1,"}</Fit>
            <Fit w={541}>индикатор</Fit>
          </Words>
          <Fit w={549}>загорается</Fit>
        </Callout>
        <Pointers width="1898" height="975" fill="none">
          <ellipse cx="643.500" cy="487" rx="58.500" ry="52" stroke="#ed1c24" strokeWidth="10" />
          <path d="M675 638L1045 342" stroke="#22b14c" strokeWidth="6" strokeLinecap="round" />
          <path d="M1066 325L1035 334L1051 354Z" fill="#22b14c" />
          <path d="M958 643L1230 362" stroke="#bfb300" strokeWidth="6" strokeLinecap="round" />
          <path d="M1248 343L1217 356L1235 374Z" fill="#bfb300" />
        </Pointers>
      </Win>
    </>
  );
}
